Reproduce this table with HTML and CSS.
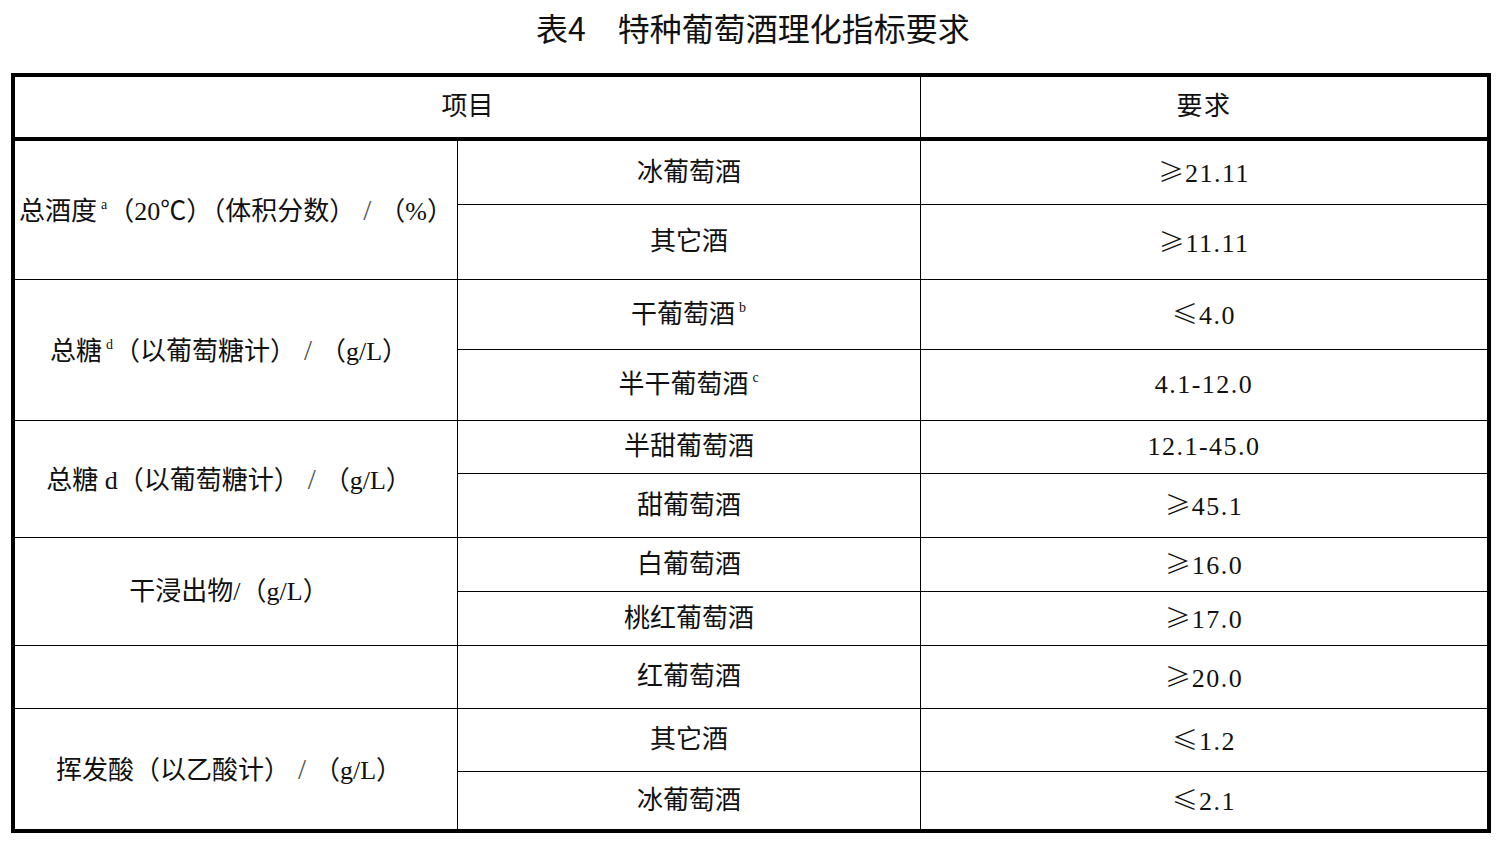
FILE: index.html
```html
<!DOCTYPE html>
<html lang="zh-CN">
<head>
<meta charset="utf-8">
<title>表4 特种葡萄酒理化指标要求</title>
<link rel="stylesheet" href="styles.css">
</head>
<body>
<div class="page">
  <h1 class="title">表4　特种葡萄酒理化指标要求</h1>
  <table class="spec">
    <colgroup>
      <col class="c1">
      <col class="c2">
      <col class="c3">
    </colgroup>
    <thead>
      <tr class="row-head">
        <th colspan="2">项目</th>
        <th class="req">要求</th>
      </tr>
    </thead>
    <tbody>
      <tr class="h64">
        <td rowspan="2" class="item wide">总酒度<sup>a</sup>（20℃）（体积分数）<span class="sl">/</span>（%）</td>
        <td class="kind">冰葡萄酒</td>
        <td class="req"><span class="rel">≥</span>21.11</td>
      </tr>
      <tr class="h75">
        <td class="kind">其它酒</td>
        <td class="req"><span class="rel">≥</span>11.11</td>
      </tr>
      <tr class="h70">
        <td rowspan="2" class="item">总糖<sup>d</sup>（以葡萄糖计）<span class="sl">/</span>（g/L）</td>
        <td class="kind">干葡萄酒<sup>b</sup></td>
        <td class="req"><span class="rel">≤</span>4.0</td>
      </tr>
      <tr class="h71">
        <td class="kind">半干葡萄酒<sup>c</sup></td>
        <td class="req">4.1-12.0</td>
      </tr>
      <tr class="h53">
        <td rowspan="2" class="item">总糖 d（以葡萄糖计）<span class="sl">/</span>（g/L）</td>
        <td class="kind">半甜葡萄酒</td>
        <td class="req">12.1-45.0</td>
      </tr>
      <tr class="h64">
        <td class="kind">甜葡萄酒</td>
        <td class="req"><span class="rel">≥</span>45.1</td>
      </tr>
      <tr class="h54">
        <td rowspan="2" class="item">干浸出物/（g/L）</td>
        <td class="kind">白葡萄酒</td>
        <td class="req"><span class="rel">≥</span>16.0</td>
      </tr>
      <tr class="h54">
        <td class="kind">桃红葡萄酒</td>
        <td class="req"><span class="rel">≥</span>17.0</td>
      </tr>
      <tr class="h63">
        <td class="item"></td>
        <td class="kind">红葡萄酒</td>
        <td class="req"><span class="rel">≥</span>20.0</td>
      </tr>
      <tr class="h63">
        <td rowspan="2" class="item end">挥发酸（以乙酸计）<span class="sl">/</span>（g/L）</td>
        <td class="kind">其它酒</td>
        <td class="req"><span class="rel">≤</span>1.2</td>
      </tr>
      <tr class="h57 last">
        <td class="kind">冰葡萄酒</td>
        <td class="req"><span class="rel">≤</span>2.1</td>
      </tr>
    </tbody>
  </table>
</div>
</body>
</html>
```

FILE: styles.css
```css
html, body {
  margin: 0;
  padding: 0;
  background: #ffffff;
}

.page {
  width: 1506px;
}

.title {
  margin: 0 0 18px 0;
  height: 55px;
  line-height: 55px;
  text-align: center;
  font-family: "Noto Sans CJK SC", sans-serif;
  font-weight: 400;
  font-size: 32px;
  color: #111;
}

.spec {
  box-sizing: border-box;
  margin-left: 11px;
  width: 1480px;
  table-layout: fixed;
  border-collapse: separate;
  border-spacing: 0;
  border: 4px solid #000;
  font-family: "Liberation Serif", "Noto Sans CJK SC", serif;
  font-size: 26px;
  color: #111;
}

.c1 { width: 443px; }
.c2 { width: 463px; }
.c3 { width: 566px; }

.spec th,
.spec td {
  box-sizing: border-box;
  padding: 0;
  text-align: center;
  vertical-align: middle;
  white-space: nowrap;
  font-weight: 400;
  border-right: 1px solid #000;
  border-bottom: 1px solid #000;
  line-height: 1.2;
}

.spec th {
  border-bottom: 4px solid #000;
}

.row-head { height: 64px; }
.h53 { height: 53px; }
.h54 { height: 54px; }
.h57 { height: 57px; }
.h63 { height: 63px; }
.h64 { height: 64px; }
.h70 { height: 70px; }
.h71 { height: 71px; }
.h75 { height: 75px; }

.spec .req {
  border-right: 0;
  letter-spacing: 1.5px;
}

.spec .last td,
.spec .end {
  border-bottom: 0;
}

.item {
  padding-right: 14px !important;
}

.item.wide {
  padding-right: 0 !important;
}

.rel {
  font-family: "Noto Sans CJK SC", sans-serif;
  font-weight: 300;
  margin-right: 1px;
  letter-spacing: 0;
}

.sl {
  display: inline-block;
  margin: 0 8px;
  font-size: 29px;
  color: #555;
}

.spec sup {
  font-size: 14px;
  line-height: 0;
  vertical-align: 11px;
  margin: 0 1px 0 4px;
}
```
